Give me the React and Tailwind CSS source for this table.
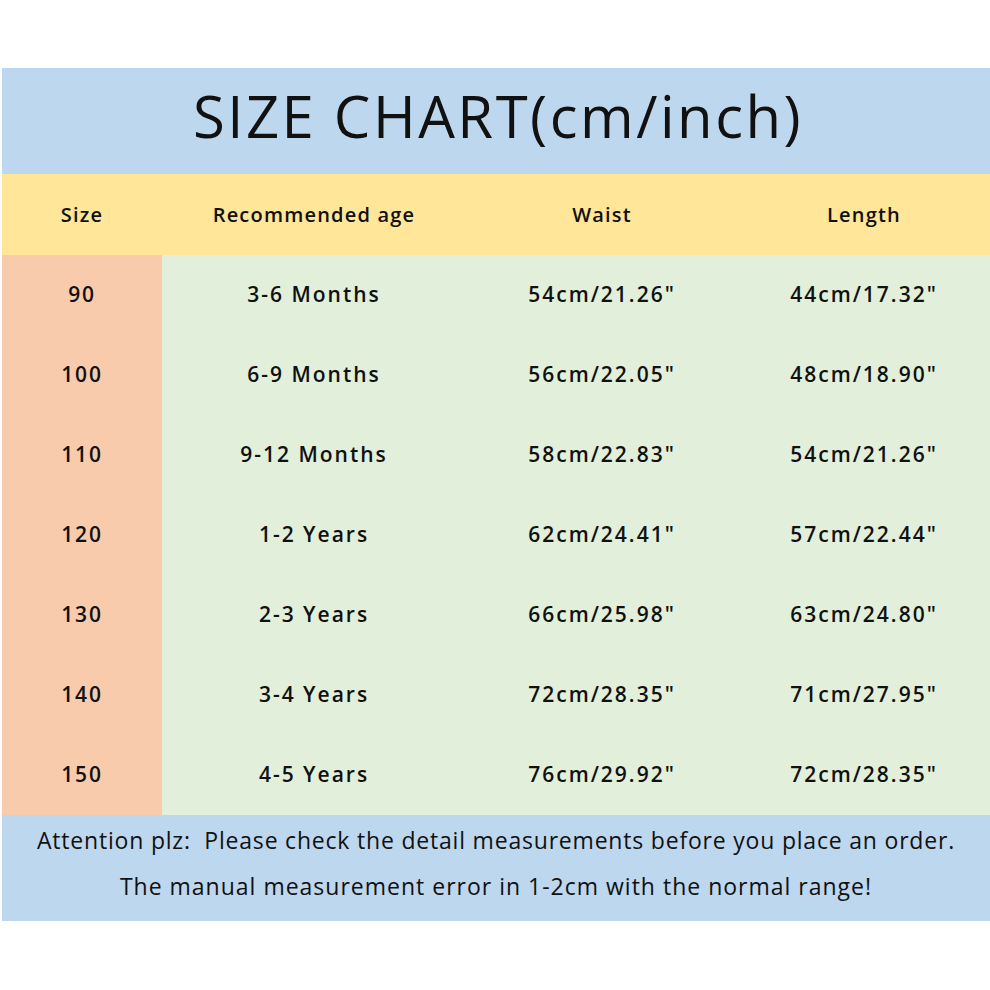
import React from "react";

const rows = [
  ["90", "3-6 Months", "54cm/21.26\"", "44cm/17.32\""],
  ["100", "6-9 Months", "56cm/22.05\"", "48cm/18.90\""],
  ["110", "9-12 Months", "58cm/22.83\"", "54cm/21.26\""],
  ["120", "1-2 Years", "62cm/24.41\"", "57cm/22.44\""],
  ["130", "2-3 Years", "66cm/25.98\"", "63cm/24.80\""],
  ["140", "3-4 Years", "72cm/28.35\"", "71cm/27.95\""],
  ["150", "4-5 Years", "76cm/29.92\"", "72cm/28.35\""],
];

const font = { fontFamily: '"Open Sans", "DejaVu Sans", sans-serif' };

export default function App() {
  return (
    <div className="w-[990px] h-[990px] bg-white pt-[68px] pl-[2px]" style={font}>
      <div className="w-[988px] flex flex-col text-[#111]">
        <div className="h-[106px] bg-[#bdd7ee] flex items-center justify-center">
          <span className="text-[58px] leading-none tracking-[2.5px] pb-[10px] pl-[4px]">SIZE CHART(cm/inch)</span>
        </div>
        <div className="h-[81px] bg-[#ffe699] grid grid-cols-[160px_304px_272px_252px] items-center text-[20px] font-semibold tracking-[1.2px]">
          <div className="text-center">Size</div>
          <div className="text-center">Recommended age</div>
          <div className="text-center">Waist</div>
          <div className="text-center">Length</div>
        </div>
        <div className="grid grid-cols-[160px_828px]">
          <div className="bg-[#f8cbad] flex flex-col">
            {rows.map((r) => (
              <div key={r[0]} className="h-20 flex items-center justify-center text-[21px] font-semibold tracking-[1.8px]">
                {r[0]}
              </div>
            ))}
          </div>
          <div className="bg-[#e2efda] flex flex-col">
            {rows.map((r) => (
              <div key={r[0]} className="h-20 grid grid-cols-[304px_272px_252px] items-center text-[21px] font-semibold tracking-[2px]">
                <div className="text-center">{r[1]}</div>
                <div className="text-center">{r[2]}</div>
                <div className="text-center">{r[3]}</div>
              </div>
            ))}
          </div>
        </div>
        <div className="h-[106px] bg-[#bdd7ee] flex flex-col items-center justify-center gap-[23px] text-[23px] leading-none pb-[10px]">
          <div className="tracking-[0.8px]">Attention plz:&nbsp; Please check the detail measurements before you place an order.</div>
          <div className="tracking-[1px]">The manual measurement error in 1-2cm with the normal range!</div>
        </div>
      </div>
    </div>
  );
}
